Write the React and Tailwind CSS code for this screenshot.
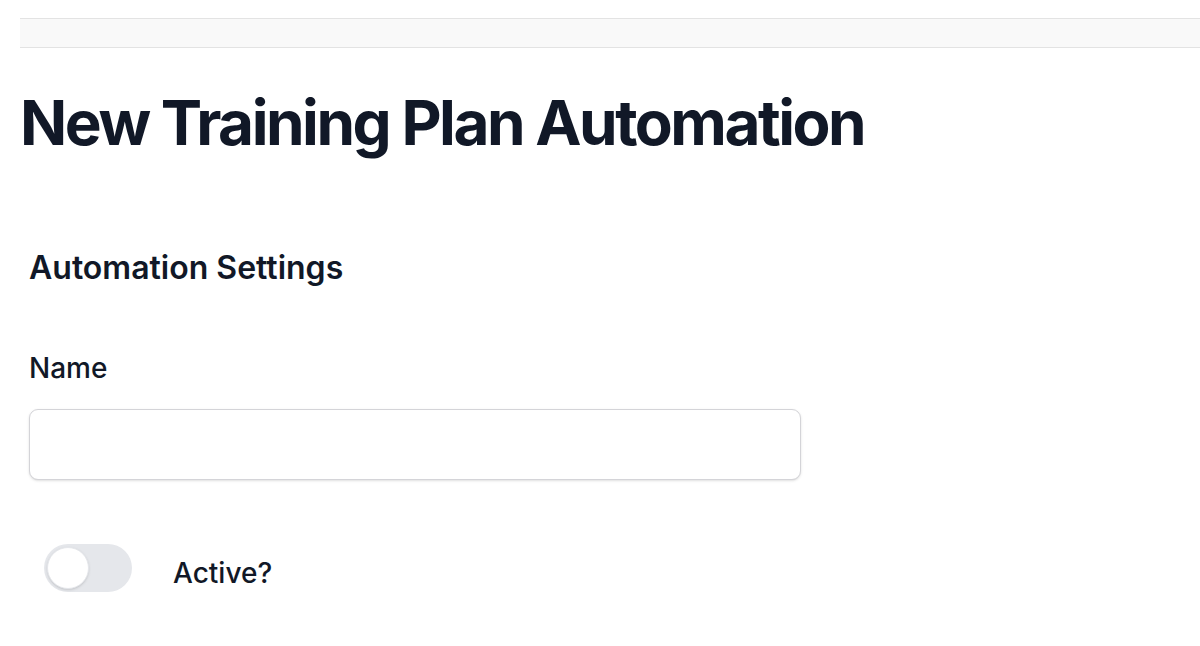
import React, { useState } from 'react';

const App = () => {
  const [name, setName] = useState('');
  const [active, setActive] = useState(false);

  return (
    <div className="min-h-[646px] bg-white pl-[20px] font-['Inter',sans-serif] text-[#111827]">
      {/* Top strip */}
      <div className="mt-[18px] h-[30px] border-y border-[#e3e3e3] bg-[#f9f9f9]" />

      <h1 className="mt-[44px] text-[62px] font-bold leading-none tracking-[-0.04em]">
        New Training Plan Automation
      </h1>

      <div className="pl-[9px]">
        <h2 className="mt-[98px] text-[32px] font-semibold leading-none">Automation Settings</h2>

        <label className="mt-[70px] block text-[28px] font-medium leading-none">Name</label>
        <input
          type="text"
          value={name}
          onChange={(e) => setName(e.target.value)}
          className="mt-[27px] block h-[71px] w-[772px] rounded-[9px] border border-[#d4d4d8] bg-white px-4 text-[24px] shadow-sm outline-none"
        />

        <div className="mt-[64px] flex items-center">
          <button
            onClick={() => setActive(!active)}
            className={`ml-[15px] flex h-[48px] w-[88px] items-center rounded-full p-[3px] ${
              active ? 'bg-[#111827] justify-end' : 'bg-[#e5e7eb] justify-start'
            }`}
          >
            <span className="h-[42px] w-[42px] rounded-full border border-[#e5e7eb] bg-white shadow" />
          </button>
          <span className="ml-[41px] pt-[10px] text-[28px] font-medium leading-none">Active?</span>
        </div>
      </div>
    </div>
  );
};

export default App;
